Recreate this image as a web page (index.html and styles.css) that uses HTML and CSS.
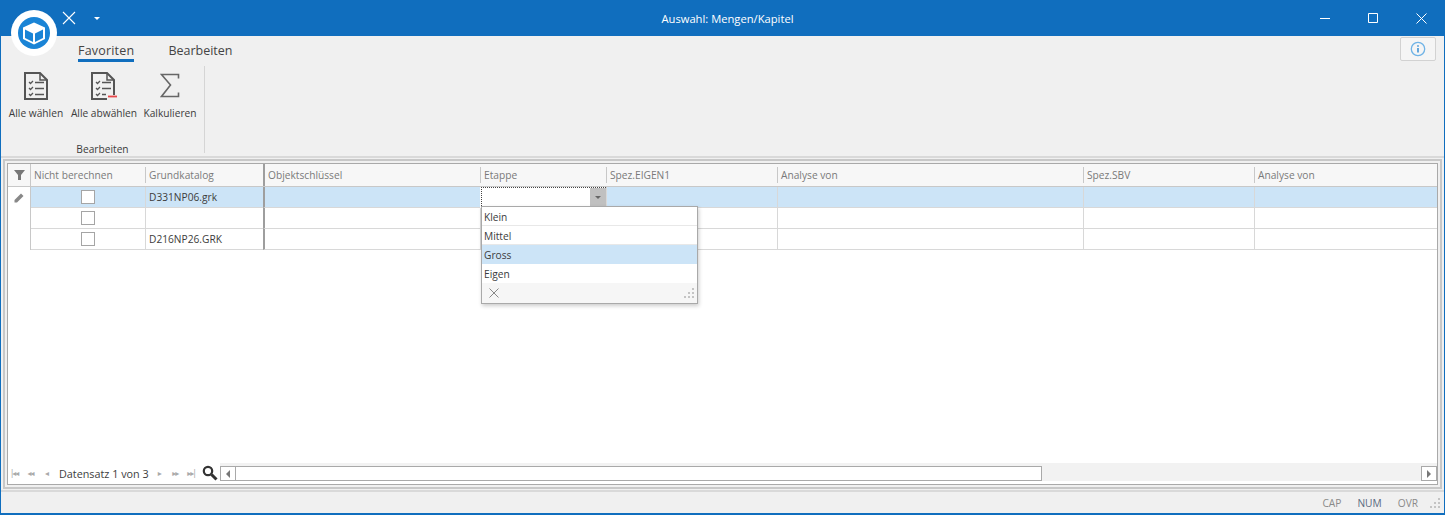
FILE: index.html
```html
<!DOCTYPE html>
<html lang="de">
<head>
    <meta charset="UTF-8">
    <meta name="viewport" content="width=device-width, initial-scale=1.0">
    <title>Auswahl: Mengen/Kapitel</title>
    <link rel="stylesheet" href="styles.css">
</head>
<body>
    <div class="window">
        <!-- Titelleiste -->
        <header class="titlebar">
            <div class="app-logo">
                <div class="app-logo-inner">
                    <svg width="32" height="32" viewBox="0 0 32 32" fill="none">
                        <path d="M16 5.500 27 10.500v11.500L16 27.500 5 22V10.500z" fill="#fff"/>
                        <path d="M7 12.500 15 16.400v8.600L7 21z" fill="#1a84d6"/>
                        <path d="M25 12.500 17 16.400v8.600l8-4z" fill="#1a84d6"/>
                    </svg>
                </div>
            </div>
            <div class="quick-bar">
                <svg class="quick-x" width="14" height="14" viewBox="0 0 14 14" stroke="#fff" stroke-width="1.1"><path d="M1 1l12 12M13 1 1 13"/></svg>
                <span class="quick-arrow"></span>
            </div>
            <div class="title-text">Auswahl: Mengen/Kapitel</div>
            <div class="win-buttons">
                <svg width="11" height="11" viewBox="0 0 11 11" stroke="#fff" stroke-width="1" fill="none"><path d="M0 5.500h10"/></svg>
                <svg width="11" height="11" viewBox="0 0 11 11" stroke="#fff" stroke-width="1" fill="none"><path d="M.5.5h9v9h-9z"/></svg>
                <svg width="11" height="11" viewBox="0 0 11 11" stroke="#fff" stroke-width="1" fill="none"><path d="M.5.5l10 10M10.500.5l-10 10"/></svg>
            </div>
        </header>

        <!-- Ribbon -->
        <section class="ribbon">
            <div class="ribbon-tabs">
                <span class="tab tab-active">Favoriten</span>
                <span class="tab">Bearbeiten</span>
                <span class="info-btn">
                    <svg width="16" height="16" viewBox="0 0 16 16" fill="none"><circle cx="8" cy="8" r="6.700" stroke="#6fb3e6" stroke-width="1.300"/><path d="M8 7v4.500" stroke="#3f93d6" stroke-width="1.600"/><path d="M8 4.200v1.600" stroke="#3f93d6" stroke-width="1.600"/></svg>
                </span>
            </div>
            <div class="ribbon-body">
                <div class="ribbon-group">
                    <div class="ribbon-items">
                        <div class="ribbon-item item-select">
                            <svg width="26" height="30" viewBox="0 0 26 30" fill="none" stroke="#555" stroke-width="2">
                                <path d="M2 2h15l7 7v19H2z"/><path d="M17 2v7h7" stroke-width="1.500"/>
                                <path d="M6 11l1.500 1.500L10 10M6 17l1.500 1.500L10 16M6 23l1.500 1.500L10 22" stroke-width="1.300"/>
                                <path d="M12 11.500h9M12 17.500h9M12 23.500h9" stroke-width="1.600"/>
                            </svg>
                            <span>Alle wählen</span>
                        </div>
                        <div class="ribbon-item item-deselect">
                            <svg width="28" height="30" viewBox="0 0 28 30" fill="none" stroke="#555" stroke-width="2">
                                <path d="M17 28H2V2h15l7 7v15"/><path d="M17 2v7h7" stroke-width="1.500"/>
                                <path d="M6 11l1.500 1.500L10 10M6 17l1.500 1.500L10 16M6 23l1.500 1.500L10 22" stroke-width="1.300"/>
                                <path d="M12 11.500h9M12 17.500h9M12 23.500h4" stroke-width="1.600"/>
                                <path d="M18 25.500h9" stroke="#e8464a" stroke-width="1.800"/>
                            </svg>
                            <span>Alle abwählen</span>
                        </div>
                        <div class="ribbon-item item-calc">
                            <svg width="20" height="26" viewBox="0 0 20 26" fill="none" stroke="#666" stroke-width="1.600"><path d="M18.500 5.500V1.500H1.500L10.500 12l-9 11.500h17v-4"/></svg>
                            <span>Kalkulieren</span>
                        </div>
                    </div>
                    <div class="group-label">Bearbeiten</div>
                </div>
                <div class="ribbon-sep"></div>
            </div>
        </section>

        <!-- Tabelle -->
        <main class="content">
            <div class="grid-frame">
                <div class="grid-inner">
                    <div class="grid-table">
                        <div class="row head-row">
                            <div class="cell row-head">
                                <svg width="11" height="10" viewBox="0 0 11 10" fill="#777"><path d="M0 0h11L7 5v5H4V5z"/></svg>
                            </div>
                            <div class="cell">Nicht berechnen</div>
                            <div class="cell">Grundkatalog</div>
                            <div class="cell cell-thick">Objektschlüssel</div>
                            <div class="cell">Etappe</div>
                            <div class="cell">Spez.EIGEN1</div>
                            <div class="cell">Analyse von</div>
                            <div class="cell">Spez.SBV</div>
                            <div class="cell">Analyse von</div>
                        </div>
                        <div class="row data-row row-selected">
                            <div class="cell row-head">
                                <svg width="10" height="10" viewBox="0 0 10 10" fill="#888"><path d="M7 .5 9.500 3 3 9.500H.5V7z"/></svg>
                            </div>
                            <div class="cell cell-check"><span class="checkbox"></span></div>
                            <div class="cell">D331NP06.grk</div>
                            <div class="cell cell-thick"></div>
                            <div class="cell cell-editor"><span class="editor-btn"></span></div>
                            <div class="cell"></div>
                            <div class="cell"></div>
                            <div class="cell"></div>
                            <div class="cell"></div>
                        </div>
                        <div class="row data-row">
                            <div class="cell row-head"></div>
                            <div class="cell cell-check"><span class="checkbox"></span></div>
                            <div class="cell"></div>
                            <div class="cell cell-thick"></div>
                            <div class="cell"></div>
                            <div class="cell"></div>
                            <div class="cell"></div>
                            <div class="cell"></div>
                            <div class="cell"></div>
                        </div>
                        <div class="row data-row">
                            <div class="cell row-head"></div>
                            <div class="cell cell-check"><span class="checkbox"></span></div>
                            <div class="cell">D216NP26.GRK</div>
                            <div class="cell cell-thick"></div>
                            <div class="cell"></div>
                            <div class="cell"></div>
                            <div class="cell"></div>
                            <div class="cell"></div>
                            <div class="cell"></div>
                        </div>

                        <!-- Dropdown Etappe -->
                        <div class="dropdown">
                            <div class="dropdown-item">Klein</div>
                            <div class="dropdown-item">Mittel</div>
                            <div class="dropdown-item dropdown-hot">Gross</div>
                            <div class="dropdown-item">Eigen</div>
                            <div class="dropdown-foot">
                                <svg width="10" height="10" viewBox="0 0 10 10" stroke="#888" stroke-width="1"><path d="M.5.5l9 9M9.500.5l-9 9"/></svg>
                                <span class="grip"><i></i><i></i><i></i><i></i><i></i><i></i></span>
                            </div>
                        </div>
                    </div>

                    <div class="pager">
                        <div class="pager-nav">
                            <span class="nav-btn">|◂◂</span>
                            <span class="nav-btn">◂◂</span>
                            <span class="nav-btn">◂</span>
                            <span class="pager-text">Datensatz 1 von 3</span>
                            <span class="nav-btn">▸</span>
                            <span class="nav-btn">▸▸</span>
                            <span class="nav-btn">▸▸|</span>
                            <svg class="pager-search" width="16" height="16" viewBox="0 0 16 16" fill="none" stroke="#333"><circle cx="6" cy="6" r="4.200" stroke-width="2.200"/><path d="M9.500 9.500 14.500 14.500" stroke-width="3"/></svg>
                        </div>
                        <div class="scrollbar">
                            <span class="scroll-btn"><span class="tri tri-left"></span></span>
                            <div class="scroll-track"><div class="scroll-thumb"></div></div>
                            <span class="scroll-btn"><span class="tri tri-right"></span></span>
                        </div>
                    </div>
                </div>
            </div>
        </main>

        <!-- Statusleiste -->
        <footer class="statusbar">
            <span>CAP</span>
            <span class="status-on">NUM</span>
            <span>OVR</span>
            <span class="grip"><i></i><i></i><i></i><i></i><i></i><i></i></span>
        </footer>
    </div>
</body>
</html>
```

FILE: styles.css
```css
* {
    box-sizing: border-box;
}
body {
    margin: 0;
    font-family: "Open Sans", "Noto Sans", Arial, sans-serif;
    font-size: 10.2px;
    color: #3c3c3c;
    overflow: hidden;
}
.window {
    width: 1445px;
    height: 515px;
    display: flex;
    flex-direction: column;
    background: #f0f0f0;
    border: 1px solid #106ebe;
    border-top: none;
    border-bottom-width: 2px;
}

/* Titelleiste */
.titlebar {
    height: 36px;
    flex: none;
    margin: 0 -1px;
    background: #106ebe;
    color: #fff;
    display: flex;
    align-items: center;
    position: relative;
}
.app-logo {
    position: absolute;
    left: 11px;
    top: 10px;
    width: 46px;
    height: 46px;
    border-radius: 50%;
    background: #fff;
    display: flex;
    align-items: center;
    justify-content: center;
    z-index: 2;
}
.app-logo-inner {
    width: 32px;
    height: 32px;
    border-radius: 50%;
    background: #1a84d6;
}
.app-logo-inner svg {
    display: block;
}
.quick-bar {
    position: absolute;
    left: 62px;
    top: 11px;
    display: flex;
    align-items: center;
    gap: 18px;
}
.quick-x {
    display: block;
}
.quick-arrow {
    width: 0;
    height: 0;
    border-left: 3px solid transparent;
    border-right: 3px solid transparent;
    border-top: 3px solid #fff;
}
.title-text {
    flex: 1;
    text-align: center;
    font-size: 11.2px;
    padding-left: 10px;
}
.win-buttons {
    position: absolute;
    right: 18px;
    top: 13px;
    display: flex;
    gap: 37px;
}

/* Ribbon */
.ribbon {
    height: 122px;
    flex: none;
    border-bottom: 2px solid #d9d9d9;
}
.ribbon-tabs {
    height: 29px;
    display: flex;
    padding-left: 77px;
    position: relative;
    gap: 34px;
    padding-top: 5px;
}
.tab {
    font-size: 12.5px;
    color: #444;
    height: 21px;
    line-height: 20px;
}
.tab-active {
    border-bottom: 3px solid #106ebe;
    letter-spacing: 0.2px;
}
.info-btn {
    position: absolute;
    right: 8px;
    top: 1px;
    width: 36px;
    height: 24px;
    background: #f5f5f5;
    border: 1px solid #d2d2d2;
    border-radius: 2px;
    display: flex;
    align-items: center;
    justify-content: center;
}
.ribbon-body {
    display: flex;
    height: 90px;
    margin-top: 1px;
}
.ribbon-group {
    width: 203px;
    height: 90px;
    display: flex;
    flex-direction: column;
}
.ribbon-sep {
    width: 1px;
    height: 87px;
    background: #d5d5d5;
}
.ribbon-items {
    flex: 1;
    display: flex;
    padding-left: 7px;
    padding-top: 5px;
}
.ribbon-item {
    display: flex;
    flex-direction: column;
    align-items: center;
    gap: 5px;
    white-space: nowrap;
}
.ribbon-item svg {
    height: 30px;
}
.item-select {
    width: 56px;
}
.item-deselect {
    width: 68px;
    margin-left: 6px;
}
.item-calc {
    width: 52px;
    margin-left: 6px;
}
.group-label {
    text-align: center;
    height: 14px;
    line-height: 14px;
}

/* Tabelle */
.content {
    flex: 1;
    padding: 1px 2px 1px 2px;
    border-bottom: 2px solid #d9d9d9;
    display: flex;
    min-height: 0;
}
.grid-frame {
    flex: 1;
    border: 2px solid #c8c8c8;
    padding: 2px;
    display: flex;
    min-width: 0;
}
.grid-inner {
    flex: 1;
    background: #fff;
    border: 1px solid #a9a9a9;
    display: flex;
    flex-direction: column;
    min-width: 0;
}
.grid-table {
    flex: 1;
    position: relative;
    min-height: 0;
}
.row {
    display: grid;
    grid-template-columns: 23px 114px 118px 217px 126px 171px 306px 171px 1fr;
}
.head-row {
    height: 23px;
    background: #f7f7f7;
    color: #7a7a7a;
    border-bottom: 1px solid #c8c8c8;
    align-items: center;
}
.head-row .cell {
    height: 16px;
    line-height: 16px;
    padding-left: 3px;
    border-left: 1px solid #c8c8c8;
}
.head-row .row-head {
    border-left: none;
    padding: 0;
    height: 22px;
    display: flex;
    align-items: center;
    justify-content: center;
    border-right: 1px solid #c8c8c8;
}
.head-row .row-head + .cell {
    border-left: none;
}
.data-row {
    height: 21px;
    background: #fff;
}
.data-row .cell {
    line-height: 20px;
    padding-left: 3px;
    border-left: 1px solid #d8d8d8;
    border-bottom: 1px solid #d8d8d8;
}
.data-row .row-head {
    border: none;
    border-right: 1px solid #c8c8c8;
    padding: 0;
    background: #fff;
    display: flex;
    align-items: center;
    justify-content: center;
}
.data-row .row-head + .cell {
    border-left: none;
}
.row-selected .cell {
    background: #cce4f7;
}
.row-selected .row-head {
    background: #fff;
}
.row > .cell-thick {
    border-left: 2px solid #9e9e9e;
}
.head-row > .cell-thick {
    align-self: stretch;
    height: 22px;
    line-height: 22px;
}
.cell-check {
    display: flex;
    align-items: center;
    justify-content: center;
    padding: 0 !important;
}
.checkbox {
    width: 14px;
    height: 14px;
    background: #fff;
    border: 1px solid #a5a5a5;
}
.data-row > .cell-editor {
    background: #fff;
    outline: 1px dotted #444;
    outline-offset: -1px;
    margin-left: 1px;
    border: none;
    display: flex;
    justify-content: flex-end;
    padding: 1px 0;
}
.editor-btn {
    width: 16px;
    background: #c0c0c0;
    position: relative;
}
.editor-btn::after {
    content: "";
    position: absolute;
    left: 5px;
    top: 8px;
    border-left: 3px solid transparent;
    border-right: 3px solid transparent;
    border-top: 3px solid #666;
}

/* Dropdown */
.dropdown {
    position: absolute;
    left: 473px;
    top: 42px;
    width: 217px;
    height: 98px;
    background: #fff;
    border: 1px solid #a9a9a9;
    box-shadow: 1px 2px 4px rgba(0, 0, 0, 0.2);
    z-index: 3;
}
.dropdown-item {
    height: 19px;
    line-height: 20px;
    padding-left: 2px;
    border-bottom: 1px solid #e8e8e8;
}
.dropdown-item:nth-child(4) {
    border-bottom: none;
}
.dropdown-hot {
    background: #cce4f7;
    border-bottom-color: #cce4f7;
}
.dropdown-foot {
    height: 20px;
    background: #f6f6f6;
    display: flex;
    align-items: center;
    justify-content: space-between;
    padding: 0 3px 0 7px;
}
.grip {
    display: grid;
    grid-template-columns: repeat(3, 2px);
    grid-template-rows: repeat(3, 2px);
    gap: 2px;
}
.grip i {
    background: #c4c4c4;
}
.grip i:nth-child(1) {
    grid-column: 3;
    grid-row: 1;
}
.grip i:nth-child(2) {
    grid-column: 2;
    grid-row: 2;
}
.grip i:nth-child(3) {
    grid-column: 3;
    grid-row: 2;
}
.grip i:nth-child(4) {
    grid-column: 1;
    grid-row: 3;
}
.grip i:nth-child(5) {
    grid-column: 2;
    grid-row: 3;
}
.grip i:nth-child(6) {
    grid-column: 3;
    grid-row: 3;
}

/* Pager + Scrollbar */
.pager {
    height: 18px;
    flex: none;
    display: flex;
    margin-bottom: 3px;
}
.pager-nav {
    width: 212px;
    flex: none;
    display: flex;
    align-items: center;
    padding: 2px 0 0 0;
    gap: 3px;
}
.nav-btn {
    color: #aaa;
    font-size: 8px;
    letter-spacing: -1px;
    width: 13px;
    text-align: center;
    font-family: "DejaVu Sans", sans-serif;
}
.pager-text {
    font-size: 10.8px;
    color: #3c3c3c;
    margin: 0 1px 0 3px;
    white-space: nowrap;
}
.pager-search {
    margin-left: 1px;
}
.scrollbar {
    flex: 1;
    display: flex;
    background: #f2f2f2;
    padding-top: 3px;
    min-width: 0;
}
.scroll-btn {
    width: 16px;
    flex: none;
    background: #fff;
    border: 1px solid #a9a9a9;
    display: flex;
    align-items: center;
    justify-content: center;
}
.tri {
    border-top: 4px solid transparent;
    border-bottom: 4px solid transparent;
}
.tri-left {
    border-right: 4px solid #777;
}
.tri-right {
    border-left: 4px solid #777;
}
.scroll-track {
    flex: 1;
}
.scroll-thumb {
    width: 806px;
    height: 100%;
    background: #fff;
    border: 1px solid #a9a9a9;
    border-left: none;
}

/* Statusleiste */
.statusbar {
    height: 21px;
    flex: none;
    display: flex;
    align-items: center;
    justify-content: flex-end;
    gap: 16px;
    padding-right: 4px;
    color: #8a8a8a;
}
.status-on {
    color: #5a6a80;
}
.statusbar .grip {
    margin-left: -4px;
}
```
